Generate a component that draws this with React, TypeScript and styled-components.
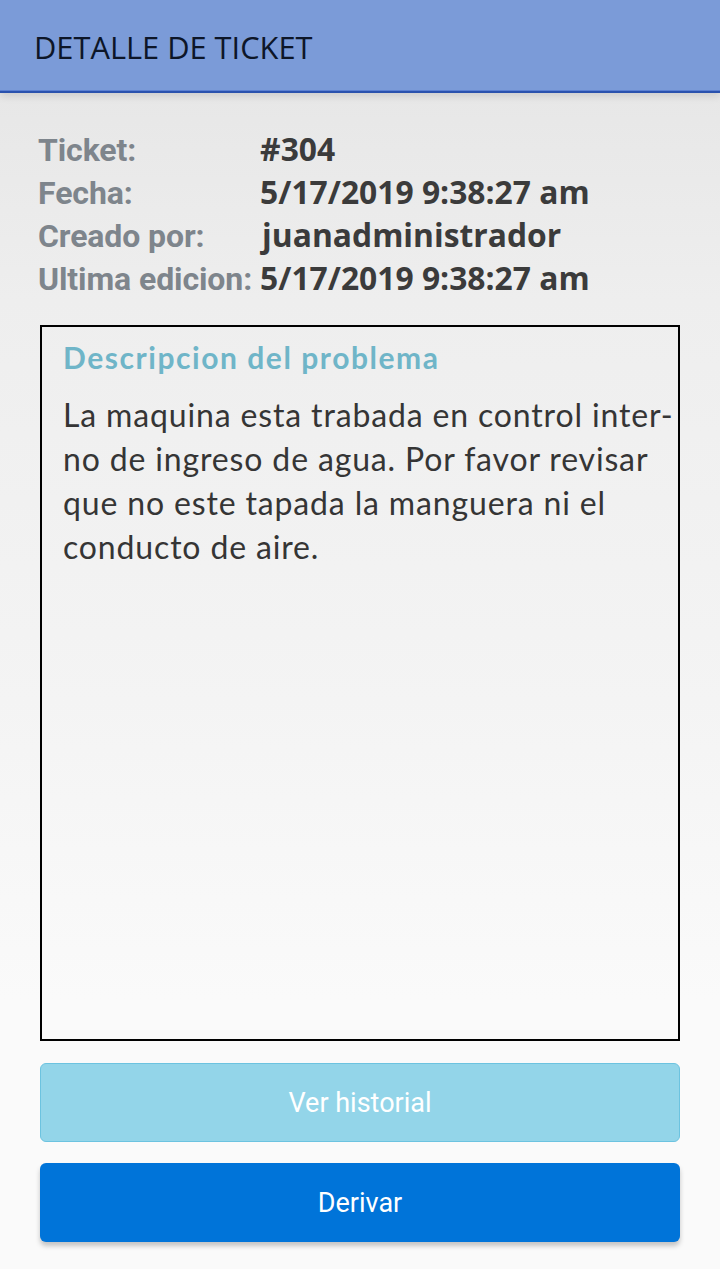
import React from "react";
import styled, { createGlobalStyle } from "styled-components";

const Global = createGlobalStyle`
  html, body { margin: 0; padding: 0; }
  body { background: #fafafa; }
  #root { min-height: 1269px; }
`;

const Screen = styled.div`
  width: 720px;
  height: 1269px;
  display: flex;
  flex-direction: column;
  background: linear-gradient(to bottom, #e4e4e4 0px, #eeeeee 300px, #f4f4f4 700px, #fafafa 1000px, #fafafa 100%);
  overflow: hidden;
`;

const Header = styled.header`
  height: 90px;
  flex: 0 0 auto;
  background: #7b9bd8;
  border-bottom: 1px solid #5b80d2;
  box-shadow: 0 2px 0 #2a52ae, 0 5px 8px rgba(0, 0, 0, 0.12);
  display: flex;
  align-items: center;
  padding-left: 34px;
  position: relative;
  z-index: 1;
`;

const Title = styled.h1`
  margin: 0;
  font-family: "Open Sans", "DejaVu Sans", sans-serif;
  font-weight: normal;
  font-size: 30.8px;
  color: #0d1628;
  margin-top: 3px;
`;

const Body = styled.main`
  flex: 1;
  display: flex;
  flex-direction: column;
  padding: 37px 40px 0 40px;
`;

const InfoGrid = styled.div`
  display: grid;
  grid-template-columns: auto 1fr;
  align-items: baseline;
  column-gap: 8px;
  margin-left: -2px;
`;

const Label = styled.div`
  font-family: Roboto, "Liberation Sans", sans-serif;
  font-weight: 700;
  font-size: 32px;
  line-height: 42px;
  color: #7e858c;
  letter-spacing: -0.1px;
`;

const Value = styled.div<{ $shift?: number }>`
  font-family: "Open Sans", "Liberation Sans", sans-serif;
  font-weight: 700;
  font-size: 31.8px;
  line-height: 42px;
  color: #3b3b3b;
  padding-left: ${(p) => p.$shift ?? 0}px;
`;

const DescBox = styled.section`
  margin-top: 25px;
  height: 716px;
  box-sizing: border-box;
  border: 2px solid #000;
  padding: 10px 0 0 21px;
`;

const DescTitle = styled.h2`
  margin: 0;
  font-family: Lato, "Open Sans", sans-serif;
  font-weight: 700;
  font-size: 30px;
  line-height: 40px;
  letter-spacing: 1.55px;
  color: #6fb5c8;
`;

const DescText = styled.p`
  margin: 16px 0 0 0;
  font-family: Lato, "Open Sans", sans-serif;
  font-size: 32px;
  line-height: 44px;
  letter-spacing: 0.85px;
  white-space: nowrap;
  color: #353535;
`;

const Buttons = styled.div`
  margin-top: 22px;
  display: flex;
  flex-direction: column;
  gap: 21px;
`;

const Button = styled.button<{ $variant: "light" | "primary" }>`
  height: 79px;
  width: 100%;
  border-radius: 6px;
  font-family: Roboto, "Liberation Sans", sans-serif;
  font-size: 27px;
  color: #ffffff;
  cursor: pointer;
  ${(p) =>
    p.$variant === "light"
      ? `
    background: #93d5e9;
    border: 1.5px solid #6cc3e0;
  `
      : `
    background: #0074d9;
    border: none;
    box-shadow: 0 4px 5px rgba(0,0,0,0.22);
  `}
`;

export default function App() {
  return (
    <>
      <Global />
      <Screen>
        <Header>
          <Title>DETALLE DE TICKET</Title>
        </Header>
        <Body>
          <InfoGrid>
            <Label>Ticket:</Label>
            <Value $shift={0}>#304</Value>
            <Label>Fecha:</Label>
            <Value $shift={0}>5/17/2019 9:38:27 am</Value>
            <Label>Creado por:</Label>
            <Value $shift={2}>juanadministrador</Value>
            <Label>Ultima edicion:</Label>
            <Value $shift={0}>5/17/2019 9:38:27 am</Value>
          </InfoGrid>
          <DescBox>
            <DescTitle>Descripcion del problema</DescTitle>
            <DescText>
              La maquina esta trabada en control inter-
              <br />
              no de ingreso de agua. Por favor revisar
              <br />
              que no este tapada la manguera ni el
              <br />
              conducto de aire.
            </DescText>
          </DescBox>
          <Buttons>
            <Button $variant="light">Ver historial</Button>
            <Button $variant="primary">Derivar</Button>
          </Buttons>
        </Body>
      </Screen>
    </>
  );
}
